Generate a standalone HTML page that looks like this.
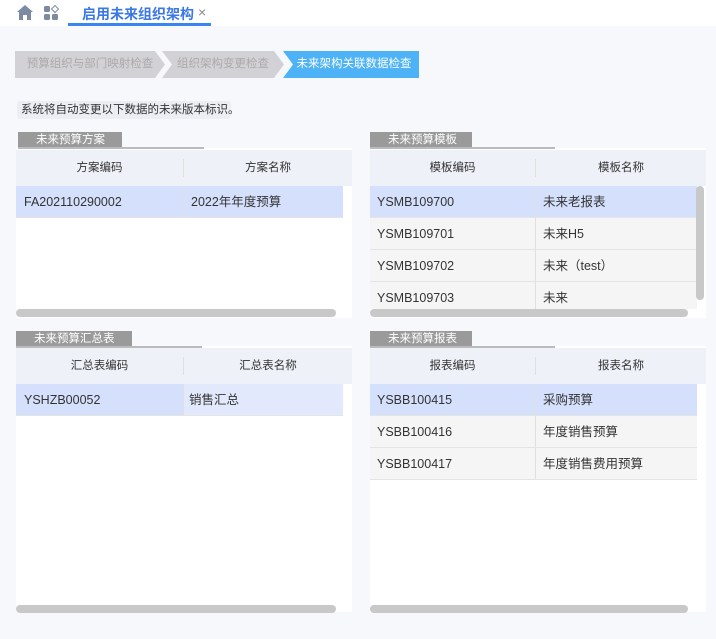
<!DOCTYPE html>
<html><head><meta charset="utf-8"><style>
*{margin:0;padding:0;box-sizing:border-box}
body{width:716px;height:639px;background:#f7f8fc;font-family:"Liberation Sans","Noto Sans CJK SC",sans-serif;position:relative;overflow:hidden;font-size:12px;color:#333}
.abs{position:absolute;white-space:nowrap}
.hdr{left:0;top:0;width:716px;height:26px;background:#fff}
.step{top:51px;height:27px;line-height:27px;font-size:11.5px;color:#aaa;background:#d2d2d6;text-align:center}
.panel{background:#fff}
.tab{background:#9a9a9a;color:#fff;font-size:11.5px;height:16px;line-height:16px;padding-left:14px}
.line{height:2px;background:#bbb}
.th{background:#eef1f8;height:36px;line-height:36px;color:#333;font-size:11.5px}
.th div,.tr div{position:absolute;top:0;height:100%}
.tr{height:32px;line-height:32px;font-size:12.5px;border-bottom:1px solid #e4e4e4;background:#f5f5f5}
.tr.sel{background:#d5e0fd}
.cd{border-left:1px solid #e0e0e0}
.hs{height:8px;background:#c8c8c8;border-radius:4px}
</style></head><body>
<div class="abs hdr"></div>
<svg class="abs" style="left:17px;top:5px" width="16" height="15" viewBox="0 0 16 15"><path d="M8 0L0 7h2v8h4V10h4v5h4V7h2z" fill="#7d8aa3"/></svg>
<svg class="abs" style="left:44px;top:5px" width="16" height="16" viewBox="0 0 16 16"><rect x="0" y="1" width="6" height="6" rx="1.5" fill="#7d8aa3"/><rect x="0" y="9" width="6" height="6" rx="1.5" fill="#7d8aa3"/><rect x="8" y="9" width="6" height="6" rx="1.5" fill="#7d8aa3"/><path d="M11 0.5L14.5 4 11 7.5 7.5 4z" fill="none" stroke="#7d8aa3" stroke-width="1"/></svg>
<div class="abs" style="left:82px;top:4px;font-size:14px;color:#3a78e6;font-weight:bold">启用未来组织架构</div>
<div class="abs" style="left:198px;top:4px;font-size:14px;color:#888">×</div>
<div class="abs" style="left:68px;top:23px;width:143px;height:3px;background:#3a86f0"></div>

<div class="abs step" style="left:15px;width:150px;clip-path:polygon(0 0,140px 0,150px 50%,140px 100%,0 100%)">预算组织与部门映射检查</div>
<div class="abs step" style="left:162px;width:122px;clip-path:polygon(0 0,112px 0,122px 50%,112px 100%,0 100%,10px 50%)">组织架构变更检查</div>
<div class="abs step" style="left:283px;width:136px;background:#4db2f6;color:#fff;padding-left:6px;clip-path:polygon(0 0,136px 0,136px 100%,0 100%,10px 50%)">未来架构关联数据检查</div>

<div class="abs" style="left:17px;top:101px;width:214px;height:18px;line-height:18px;background:#eceef3;border-radius:3px;padding-left:4px;font-size:11.5px;color:#333">系统将自动变更以下数据的未来版本标识。</div>

<!-- top left -->
<div class="abs panel" style="left:16px;top:148px;width:336px;height:170px"></div>
<div class="abs tab" style="left:18px;top:132px;width:104px;padding-left:18px">未来预算方案</div>
<div class="abs line" style="left:18px;top:147px;width:186px"></div>
<div class="abs th" style="left:16px;top:150px;width:336px"><div style="left:0;width:167px;text-align:center">方案编码</div><div class="cd" style="left:167px;width:169px;text-align:center;top:9px;height:18px;line-height:18px">方案名称</div></div>
<div class="abs tr sel" style="left:16px;top:186px;width:327px"><div style="left:8px">FA202110290002</div><div class="cd" style="left:167px;padding-left:7px">2022年年度预算</div></div>
<div class="abs hs" style="left:16px;top:309px;width:320px"></div>

<!-- top right -->
<div class="abs panel" style="left:370px;top:148px;width:336px;height:170px"></div>
<div class="abs tab" style="left:370px;top:132px;width:102px;padding-left:18px">未来预算模板</div>
<div class="abs line" style="left:370px;top:147px;width:185px"></div>
<div class="abs th" style="left:370px;top:150px;width:336px"><div style="left:0;width:165px;text-align:center">模板编码</div><div class="cd" style="left:165px;width:171px;text-align:center;top:9px;height:18px;line-height:18px">模板名称</div></div>
<div class="abs tr sel" style="left:370px;top:186px;width:327px"><div style="left:7px">YSMB109700</div><div class="cd" style="left:165px;padding-left:7px">未来老报表</div></div>
<div class="abs tr" style="left:370px;top:218px;width:327px"><div style="left:7px">YSMB109701</div><div class="cd" style="left:165px;padding-left:7px">未来H5</div></div>
<div class="abs tr" style="left:370px;top:250px;width:327px"><div style="left:7px">YSMB109702</div><div class="cd" style="left:165px;padding-left:7px">未来（test）</div></div>
<div class="abs tr" style="left:370px;top:282px;width:327px;height:27px;border:none"><div style="left:7px">YSMB109703</div><div class="cd" style="left:165px;padding-left:7px">未来</div></div>
<div class="abs" style="left:696px;top:186px;width:8px;height:114px;background:#c8c8c8;border-radius:4px"></div>
<div class="abs hs" style="left:370px;top:309px;width:318px"></div>

<!-- bottom left -->
<div class="abs panel" style="left:16px;top:346px;width:336px;height:266px"></div>
<div class="abs tab" style="left:16px;top:331px;width:116px;padding-left:18px">未来预算汇总表</div>
<div class="abs line" style="left:16px;top:346px;width:186px"></div>
<div class="abs th" style="left:16px;top:348px;width:336px"><div style="left:0;width:167px;text-align:center">汇总表编码</div><div class="cd" style="left:167px;width:169px;text-align:center;top:9px;height:18px;line-height:18px">汇总表名称</div></div>
<div class="abs tr sel" style="left:16px;top:384px;width:327px;background:#e2e9fd"><div style="left:0;width:167px;padding-left:8px;background:#d5e0fd">YSHZB00052</div><div class="cd" style="left:167px;padding-left:5px">销售汇总</div></div>
<div class="abs hs" style="left:16px;top:605px;width:320px"></div>

<!-- bottom right -->
<div class="abs panel" style="left:370px;top:346px;width:336px;height:266px"></div>
<div class="abs tab" style="left:370px;top:331px;width:102px;padding-left:18px">未来预算报表</div>
<div class="abs line" style="left:370px;top:346px;width:185px"></div>
<div class="abs th" style="left:370px;top:348px;width:336px"><div style="left:0;width:165px;text-align:center">报表编码</div><div class="cd" style="left:165px;width:171px;text-align:center;top:9px;height:18px;line-height:18px">报表名称</div></div>
<div class="abs tr sel" style="left:370px;top:384px;width:327px"><div style="left:7px">YSBB100415</div><div class="cd" style="left:165px;padding-left:7px">采购预算</div></div>
<div class="abs tr" style="left:370px;top:416px;width:327px"><div style="left:7px">YSBB100416</div><div class="cd" style="left:165px;padding-left:7px">年度销售预算</div></div>
<div class="abs tr" style="left:370px;top:448px;width:327px"><div style="left:7px">YSBB100417</div><div class="cd" style="left:165px;padding-left:7px">年度销售费用预算</div></div>
<div class="abs hs" style="left:370px;top:605px;width:318px"></div>
</body></html>
